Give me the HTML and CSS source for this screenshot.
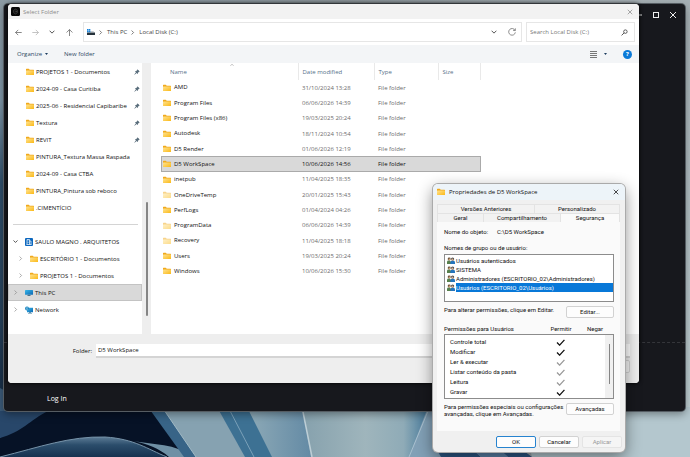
FILE: index.html
```html
<!DOCTYPE html>
<html lang="en">
<head>
<meta charset="utf-8">
<title>Select Folder</title>
<link rel="stylesheet" href="styles.css">
</head>
<body>
<svg class="defs" aria-hidden="true">
  <defs>
    <linearGradient id="fold" x1="0" y1="0" x2="1" y2="1"><stop offset="0" stop-color="#ffe391"/><stop offset="1" stop-color="#fbb917"/></linearGradient>
    <linearGradient id="scr" x1="0" y1="0" x2="1" y2="1"><stop offset="0" stop-color="#38b6e8"/><stop offset="1" stop-color="#0a68b4"/></linearGradient>
  </defs>
  <symbol id="folder" viewBox="0 0 16 14"><path d="M0 1.500Q0 .5 1 .5h4.500L7.500 2.500H15q1 0 1 1V6H0z" fill="#f0a91c"/><path d="M0 5q0-1 1-1h14q1 0 1 1v7q0 1-1 1H1q-1 0-1-1z" fill="url(#fold)"/></symbol>
  <symbol id="pin" viewBox="0 0 12 12"><path d="M7 .5 11.500 5l-1.500.6-2 2-.4 2.700L5.500 8.200 1 11.500.6 11 3.900 6.500 1.700 4.400l2.700-.4 2-2z" fill="#5b6f7d"/></symbol>
  <symbol id="chev" viewBox="0 0 8 8"><path d="M2.500.8 5.700 4 2.500 7.200" fill="none" stroke="currentColor" stroke-width="1.100"/></symbol>
  <symbol id="chevdown" viewBox="0 0 8 8"><path d="M.8 2.300 4 5.500l3.200-3.200" fill="none" stroke="currentColor" stroke-width="1.200"/></symbol>
  <symbol id="pc" viewBox="0 0 16 14"><rect y="1" width="16" height="9.500" rx="1" fill="url(#scr)"/><path d="M6 10.500h4v1.500h2v1.200H4V12h2z" fill="#4b7289"/></symbol>
  <symbol id="net" viewBox="0 0 16 15"><path d="M4 3h12v9H4z" fill="url(#scr)"/><path d="M8 12h4v1.300h2v1.200H6v-1.200h2z" fill="#3b7999"/><circle cx="4" cy="4.500" r="4" fill="#1b7bb9"/><path d="M1 3q3 2 6-1M1 6q3-2 6 1M4 .5v8" stroke="#9be0f5" stroke-width=".9" fill="none"/></symbol>
  <symbol id="users" viewBox="0 0 14 12"><path d="M0 12V8q0-2 3-2t4 2v4z" fill="#57804e"/><circle cx="3.800" cy="3.300" r="2.600" fill="#5e4a35"/><circle cx="4.200" cy="4" r="1.700" fill="#d9a878"/><path d="M6 12V9q0-2.500 4-2.500T14 9v3z" fill="#2575bd"/><circle cx="9.800" cy="3.500" r="2.800" fill="#474747"/><circle cx="9.600" cy="4.300" r="1.800" fill="#d8b193"/></symbol>
  <symbol id="x" viewBox="0 0 8 8"><path d="m1 1 6 6M7 1 1 7" fill="none" stroke="currentColor" stroke-width="1"/></symbol>
  <symbol id="tick" viewBox="0 0 10 8"><path d="M1 4 4 7l5.500-6" fill="none" stroke="currentColor" stroke-width="1.500"/></symbol>
</svg>

<svg class="wallpaper" viewBox="0 0 690 457" preserveAspectRatio="none" aria-hidden="true">
  <defs>
    <linearGradient id="bg"><stop offset="0" stop-color="#8b9ba6"/><stop offset=".5" stop-color="#8b9499"/><stop offset="1" stop-color="#a7b1b6"/></linearGradient>
    <linearGradient id="lf" x1="0" y1="0" x2="0" y2="1"><stop offset="0" stop-color="#8d9ba4"/><stop offset=".22" stop-color="#7f97a8"/><stop offset=".4" stop-color="#31516d"/><stop offset=".7" stop-color="#27425c"/><stop offset="1" stop-color="#0b1d35"/></linearGradient>
    <linearGradient id="wave" x1="0" y1="0" x2="0" y2="1"><stop offset="0" stop-color="#5d7c96"/><stop offset=".4" stop-color="#2b4d6b"/><stop offset="1" stop-color="#163250"/></linearGradient>
    <linearGradient id="pale"><stop offset="0" stop-color="#86a1ad"/><stop offset=".5" stop-color="#9fb5bc"/><stop offset=".8" stop-color="#8fabb7"/><stop offset="1" stop-color="#44789a"/></linearGradient>
    <linearGradient id="mid"><stop offset="0" stop-color="#8eaab7"/><stop offset="1" stop-color="#6289a4"/></linearGradient>
    <linearGradient id="right" x1="0" y1="0" x2="0" y2="1"><stop offset="0" stop-color="#a6b0b5"/><stop offset="1" stop-color="#c0d0d4"/></linearGradient>
  </defs>
  <rect width="690" height="457" fill="url(#bg)"/>
  <rect width="60" height="457" fill="url(#lf)"/>
  <rect x="600" width="90" height="457" fill="url(#right)"/>
  <rect y="405" width="190" height="52" fill="#061226"/>
  <path d="M0 388q22 12 44 20L0 438z" fill="#3b5a78"/>
  <path d="M0 438C22 432 30 420 48 411H0z" fill="#28476a"/>
  <path d="M0 457C40 447 70 436 105 437c30 2 42 12 62 20z" fill="url(#wave)"/>
  <path d="M0 457c40-10 70-21 105-20 30 2 42 12 62 20" fill="none" stroke="#7693a9" stroke-width="1"/>
  <path d="M134 441c20 4 40 2 60 16h-25c-10-9-22-13-35-16z" fill="#6f90a5"/>
  <path d="M148 407h90l22 50h-65z" fill="#86a2b1"/>
  <path d="M148 407h14l34 50h-12z" fill="#386487"/>
  <path d="m162 407 34 50" stroke="#a2bac5" stroke-width="1"/>
  <path d="M217 407h30l28 50h-30z" fill="#3d7193"/>
  <path d="m228 407 26 50" stroke="#7ba1b9" stroke-width="1"/>
  <path d="M247 407h57l10 50h-42z" fill="url(#mid)"/>
  <path d="M302 407h127l-17 50h-101z" fill="url(#pale)"/>
  <path d="m302 407 10 50" stroke="#bdced6" stroke-width="1.500"/>
  <path d="M428 407h80v50h-99z" fill="#82a0b6"/>
  <path d="m428 411-19 46" stroke="#a9c0cf" stroke-width="1"/>
  <path d="M436 448h35l10 9h-40zM498 448h22l12 9h-24z" fill="#2c5784"/>
  <path d="M471 448h27l10 9h-27z" fill="#5a80a6"/>
  <path d="M520 407h170v50H532z" fill="#b4c7ce"/>
</svg>

<section class="app" aria-label="Application">
  <header class="app-controls">
    <button aria-label="Minimize"><svg viewBox="0 0 8 8"><path d="M1 4h6" stroke="#eee"/></svg></button>
    <button aria-label="Maximize"><svg viewBox="0 0 8 8"><rect x="1.500" y="1.500" width="5" height="5" fill="none" stroke="#eee"/></svg></button>
    <button aria-label="Close"><svg><use href="#x"/></svg></button>
  </header>
  <div class="app-main"></div>
  <footer class="app-foot"><a href="#login">Log In</a></footer>
</section>

<section class="dialog" aria-label="Select Folder">
  <header class="dlg-title">
    <svg class="logo" viewBox="0 0 18 18"><rect width="18" height="18" rx="3" fill="#070707"/><path d="M5 6.500 9 4l4 2.500v5L9 14l-4-2.500z" fill="#171717" stroke="#444" stroke-width="1.200"/><path d="M9 9h3" stroke="#666"/></svg>
    <h1>Select Folder</h1>
    <button class="plain" aria-label="Close"><svg class="i6"><use href="#x"/></svg></button>
  </header>

  <div class="nav">
    <button class="plain" aria-label="Back"><svg viewBox="0 0 12 12"><path d="M11.500 6H1m4.500-4.500L1 6l4.500 4.500" fill="none" stroke="#555" stroke-width="1.200"/></svg></button>
    <button class="plain" aria-label="Forward"><svg viewBox="0 0 12 12"><path d="M.5 6H11M6.500 1.500 11 6l-4.500 4.500" fill="none" stroke="#aaa" stroke-width="1.200"/></svg></button>
    <button class="plain small" aria-label="Recent"><svg><use href="#chevdown"/></svg></button>
    <button class="plain" aria-label="Up"><svg viewBox="0 0 12 12"><path d="M6 12V1M1 6l5-5 5 5" fill="none" stroke="#555" stroke-width="1.200"/></svg></button>
    <div class="address">
      <svg class="drive" viewBox="0 0 16 12"><path d="M0 7h16v5H0z" fill="#26323b"/><path d="M1 7h14l-2-2H3z" fill="#8b969d"/><path d="M0 0h3v3H0zM3.700 0h3v3h-3zM0 3.600h3v3H0zM3.700 3.600h3v3h-3z" fill="#1683dc"/></svg>
      <svg class="sep"><use href="#chev"/></svg><a href="#pc">This PC</a>
      <svg class="sep"><use href="#chev"/></svg><a href="#c">Local Disk (C:)</a>
      <span class="grow"></span>
      <button class="plain small" aria-label="History"><svg><use href="#chevdown"/></svg></button>
      <button class="plain reload" aria-label="Refresh"><svg viewBox="0 0 12 12"><path d="M10.500 3.500A5 5 0 1 0 11 6.500M11 .5v3.300H7.700" fill="none" stroke="#666" stroke-width="1.100"/></svg></button>
    </div>
    <div class="search">
      <input type="text" aria-label="Search" placeholder="Search Local Disk (C:)">
      <svg viewBox="0 0 12 12"><circle cx="7.500" cy="4.500" r="3" fill="none" stroke="#333" stroke-width="1.300"/><path d="M5.300 6.700 1 11" stroke="#333" stroke-width="1.400"/></svg>
    </div>
  </div>

  <div class="tools">
    <button class="plain">Organize <svg class="tri" viewBox="0 0 6 4"><path d="M0 0h6L3 4z" fill="#1c3d5e"/></svg></button>
    <button class="plain">New folder</button>
    <span class="grow"></span>
    <button class="plain view" aria-label="View"><svg viewBox="0 0 7 7"><path d="M0 .5h7M0 2.500h7M0 4.500h7M0 6.500h7" stroke="#777"/></svg><svg class="tri" viewBox="0 0 6 4"><path d="M0 0h6L3 4z" fill="#1c3d5e"/></svg></button>
    <button class="plain help" aria-label="Help">?</button>
  </div>

  <div class="body">
    <nav class="tree" aria-label="Folders">
      <ul>
        <li class="q"><svg class="fi"><use href="#folder"/></svg><span>PROJETOS 1 - Documentos</span><svg class="pin"><use href="#pin"/></svg></li>
        <li class="q"><svg class="fi"><use href="#folder"/></svg><span>2024-09 - Casa Curitiba</span><svg class="pin"><use href="#pin"/></svg></li>
        <li class="q"><svg class="fi"><use href="#folder"/></svg><span>2025-06 - Residencial Capibaribe</span><svg class="pin"><use href="#pin"/></svg></li>
        <li class="q"><svg class="fi"><use href="#folder"/></svg><span>Textura</span><svg class="pin"><use href="#pin"/></svg></li>
        <li class="q"><svg class="fi"><use href="#folder"/></svg><span>REVIT</span><svg class="pin"><use href="#pin"/></svg></li>
        <li class="q"><svg class="fi"><use href="#folder"/></svg><span>PINTURA_Textura Massa Raspada</span></li>
        <li class="q"><svg class="fi"><use href="#folder"/></svg><span>2024-09 - Casa CTBA</span></li>
        <li class="q"><svg class="fi"><use href="#folder"/></svg><span>PINTURA_Pintura sob reboco</span></li>
        <li class="q"><svg class="fi"><use href="#folder"/></svg><span>.CIMENTÍCIO</span></li>
        <li class="rule"></li>
        <li><svg class="tw open"><use href="#chevdown"/></svg><svg class="fi" viewBox="0 0 16 16"><rect width="16" height="16" rx="2" fill="#0c67be"/><path d="M4 13V3h5v10M9 6h3v7M6 5v1.500M6 8v1.500M3 13h10" stroke="#fff" stroke-width="1.400" fill="none"/></svg><span>SAULO MAGNO . ARQUITETOS</span></li>
        <li class="sub"><svg class="tw"><use href="#chev"/></svg><svg class="fi"><use href="#folder"/></svg><span>ESCRITÓRIO 1 - Documentos</span></li>
        <li class="sub"><svg class="tw"><use href="#chev"/></svg><svg class="fi"><use href="#folder"/></svg><span>PROJETOS 1 - Documentos</span></li>
        <li class="sel"><svg class="tw"><use href="#chev"/></svg><svg class="fi"><use href="#pc"/></svg><span>This PC</span></li>
        <li><svg class="tw"><use href="#chev"/></svg><svg class="fi"><use href="#net"/></svg><span>Network</span></li>
      </ul>
    </nav>
    <div class="gutter"><i></i></div>
    <div class="files">
      <table>
        <colgroup><col class="c1"><col class="c2"><col class="c3"><col class="c4"></colgroup>
        <thead><tr><th>Name<svg class="sort" viewBox="0 0 8 8"><path d="M1 5.500 4 2.500l3 3" fill="none" stroke="#777"/></svg></th><th>Date modified</th><th>Type</th><th>Size</th></tr></thead>
        <tbody>
          <tr><td><svg class="fi"><use href="#folder"/></svg>AMD</td><td>31/10/2024 13:28</td><td>File folder</td><td></td></tr>
          <tr><td><svg class="fi"><use href="#folder"/></svg>Program Files</td><td>06/06/2026 14:39</td><td>File folder</td><td></td></tr>
          <tr><td><svg class="fi"><use href="#folder"/></svg>Program Files (x86)</td><td>19/03/2025 20:24</td><td>File folder</td><td></td></tr>
          <tr><td><svg class="fi"><use href="#folder"/></svg>Autodesk</td><td>18/11/2024 10:54</td><td>File folder</td><td></td></tr>
          <tr><td><svg class="fi"><use href="#folder"/></svg>D5 Render</td><td>01/06/2026 12:19</td><td>File folder</td><td></td></tr>
          <tr class="sel"><td><svg class="fi"><use href="#folder"/></svg>D5 WorkSpace</td><td>10/06/2026 14:56</td><td>File folder</td><td></td></tr>
          <tr><td><svg class="fi"><use href="#folder"/></svg>inetpub</td><td>11/04/2025 18:35</td><td>File folder</td><td></td></tr>
          <tr><td><svg class="fi dim"><use href="#folder"/></svg>OneDriveTemp</td><td>20/01/2025 15:43</td><td>File folder</td><td></td></tr>
          <tr><td><svg class="fi"><use href="#folder"/></svg>PerfLogs</td><td>01/04/2024 04:26</td><td>File folder</td><td></td></tr>
          <tr><td><svg class="fi dim"><use href="#folder"/></svg>ProgramData</td><td>06/06/2026 14:39</td><td>File folder</td><td></td></tr>
          <tr><td><svg class="fi dim"><use href="#folder"/></svg>Recovery</td><td>11/04/2025 18:18</td><td>File folder</td><td></td></tr>
          <tr><td><svg class="fi"><use href="#folder"/></svg>Users</td><td>19/03/2025 20:24</td><td>File folder</td><td></td></tr>
          <tr><td><svg class="fi"><use href="#folder"/></svg>Windows</td><td>10/06/2026 15:30</td><td>File folder</td><td></td></tr>
        </tbody>
      </table>
    </div>
  </div>

  <footer class="dlg-foot">
    <label for="folder-name">Folder:</label>
    <input id="folder-name" type="text" value="D5 WorkSpace">
    <div class="dlg-actions"><button aria-label="Select folder"></button><button aria-label="Cancel"></button></div>
  </footer>
</section>

<section class="props" lang="pt" aria-label="Propriedades">
  <header class="p-title">
    <svg class="fi"><use href="#folder"/></svg>
    <h2>Propriedades de D5 WorkSpace</h2>
    <button class="plain" aria-label="Fechar"><svg class="i6"><use href="#x"/></svg></button>
  </header>
  <div class="tabs back"><button>Versões Anteriores</button><button>Personalizado</button></div>
  <div class="tabs front"><button>Geral</button><button>Compartilhamento</button><button class="on">Segurança</button></div>
  <div class="panel">
    <p class="object"><span>Nome do objeto:</span><span>C:\D5 WorkSpace</span></p>
    <p class="cap">Nomes de grupo ou de usuário:</p>
    <ul class="box groups">
      <li><svg><use href="#users"/></svg><span>Usuários autenticados</span></li>
      <li><svg><use href="#users"/></svg><span>SISTEMA</span></li>
      <li><svg><use href="#users"/></svg><span>Administradores (ESCRITORIO_02\Administradores)</span></li>
      <li class="on"><svg><use href="#users"/></svg><span>Usuários (ESCRITORIO_02\Usuários)</span></li>
    </ul>
    <div class="line"><p>Para alterar permissões, clique em Editar.</p><button class="btn">Editar...</button></div>
    <div class="perm-head"><span>Permissões para Usuários</span><span>Permitir</span><span>Negar</span></div>
    <div class="box perms">
      <table>
        <tr><td>Controle total</td><td><svg><use href="#tick"/></svg></td></tr>
        <tr><td>Modificar</td><td><svg><use href="#tick"/></svg></td></tr>
        <tr><td>Ler &amp; executar</td><td><svg class="soft"><use href="#tick"/></svg></td></tr>
        <tr><td>Listar conteúdo da pasta</td><td><svg class="soft"><use href="#tick"/></svg></td></tr>
        <tr><td>Leitura</td><td><svg class="soft"><use href="#tick"/></svg></td></tr>
        <tr><td>Gravar</td><td><svg><use href="#tick"/></svg></td></tr>
      </table>
      <div class="bar"><i></i></div>
    </div>
    <div class="line adv"><p>Para permissões especiais ou configurações<br>avançadas, clique em Avançadas.</p><button class="btn">Avançadas</button></div>
  </div>
  <footer class="p-foot"><button class="btn ok">OK</button><button class="btn">Cancelar</button><button class="btn" disabled>Aplicar</button></footer>
</section>
</body>
</html>
```
FILE: styles.css
```css
* { box-sizing: border-box; }
body {
  margin: 0;
  height: 100vh;
  overflow: hidden;
  position: relative;
  font: 6px/8px "Open Sans", "Noto Sans", sans-serif;
  color: #111;
}
h1, h2, p, ul { margin: 0; padding: 0; font-size: inherit; font-weight: 400; list-style: none; }
svg { display: block; flex: none; }
button, input { font: inherit; color: inherit; padding: 0; margin: 0; }
a { color: inherit; text-decoration: none; }
i { display: block; }
.defs { position: absolute; width: 0; height: 0; }
.wallpaper { position: absolute; inset: 0; width: 100%; height: 100%; }
.grow { flex: 1; }
.plain { border: 0; background: none; display: flex; align-items: center; }
.i6 { width: 6px; height: 6px; }
.fi { width: 8px; height: 8px; }
.dim { opacity: .5; }

/* application window */
.app {
  position: absolute;
  inset: 4px 5px 46px 4px;
  display: flex;
  flex-direction: column;
  background: #17181d;
  border-radius: 4px;
  box-shadow: 0 0 0 1px #555c62, 0 3px 8px #0006;
}
.app-controls { display: flex; justify-content: flex-end; gap: 9px; padding: 7px 8px 0; }
.app-controls button { border: 0; background: none; color: #eee; width: 8px; height: 8px; }
.app-controls svg { width: 8px; height: 8px; }
.app-main { flex: 1; border-bottom: 1px dashed #34353a; }
.app-foot { height: 68px; padding: 52px 43px 0; color: #fff; font-size: 7px; }

/* folder picker */
.dialog {
  position: absolute;
  inset: 4px 51px 74px 8px;
  display: flex;
  flex-direction: column;
  background: #fff;
  border-radius: 4px;
  overflow: hidden;
  box-shadow: 0 0 4px #000;
}
.dlg-title { height: 15px; display: flex; align-items: center; gap: 3px; padding: 0 6px 0 3px; background: #f2f2f2; color: #8b8b8b; }
.dlg-title h1 { flex: 1; }
.logo { width: 9px; height: 9px; }
.nav { height: 26px; display: flex; align-items: center; padding: 0 4px 0 7px; color: #444; }
.nav > .plain { width: 8px; margin-right: 9px; }
.nav > .plain svg { width: 7px; height: 7px; }
.nav > .small svg, .address .small svg { width: 6px; height: 6px; }
.address, .search { height: 20px; border: 1px solid #e6e6e6; display: flex; align-items: center; }
.address { flex: 1; padding: 0 5px 0 3px; margin-right: 4px; }
.drive { width: 8px; height: 6px; margin-right: 2px; }
.sep { width: 5px; height: 5px; margin: 0 4px 0 1px; }
.address a { margin-right: 2px; }
.address .small { margin-right: 11px; }
.reload svg { width: 8px; height: 8px; }
.search { width: 109px; padding: 0 6px 0 3px; }
.search input { flex: 1; min-width: 0; border: 0; outline: 0; background: none; }
.search input::placeholder { color: #777; opacity: 1; }
.search svg { width: 7px; height: 7px; }
.tools { height: 18px; display: flex; align-items: center; padding: 0 7px 0 9px; background: #f3f5f7; color: #2f4a63; }
.tools .plain { margin-right: 16px; gap: 3px; }
.tri { width: 3px; height: 2px; }
.tools .view { gap: 7px; }
.view svg:first-child { width: 7px; height: 7px; }
.tools .help { width: 9px; height: 9px; margin: 0; justify-content: center; border-radius: 50%; background: #0b7ad8; color: #fff; font-weight: 700; }

.body { flex: 1; min-height: 0; display: flex; }
.tree { width: 134px; }
.tree li { height: 17px; display: flex; align-items: center; padding-left: 5px; }
.tree li span { flex: 1; margin-left: 2px; white-space: nowrap; }
.tree .q { padding: 0 2px 0 18px; }
.tree .sub { padding-left: 10px; }
.tw { width: 5px; height: 5px; margin-right: 7px; color: #888; }
.tree .open { color: #222; }
.pin { width: 6px; height: 6px; }
.tree .rule::before { content: ""; width: 125px; height: 1px; background: #d4d4d4; }
.tree .sel { background: #d9d9d9; outline: 1px solid #c3c3c3; outline-offset: -1px; }
.gutter { width: 9px; background: #eee; padding: 139px 3px 0 4px; }
.gutter i { height: 114px; background: #858585; border-radius: 1px; }
.files { flex: 1; padding-left: 10px; }
.files table { width: 320px; height: 216px; border-collapse: collapse; table-layout: fixed; }
.c1 { width: 137px; } .c2 { width: 76px; } .c3 { width: 64px; }
.files th, .files td { padding: 0 0 0 4px; text-align: left; font-weight: 400; white-space: nowrap; color: #6c6c6c; vertical-align: middle; }
.files th { height: 17px; color: #557089; border-right: 1px solid #e9e9e9; position: relative; }
.files th:first-child { padding-left: 9px; }
.sort { position: absolute; left: 68px; top: 0; width: 6px; height: 4px; }
.files td:first-child { padding-left: 2px; color: #111; }
.files td .fi { display: inline-block; vertical-align: middle; margin-right: 3px; }
.files .sel { background: #d9d9d9; outline: 1px solid #aaa; outline-offset: -1px; }
.files .sel td { color: #111; }

.dlg-foot {
  height: 49px;
  background: #eee;
  display: grid;
  grid-template-columns: 84px 1fr;
  grid-template-rows: 14px 13px;
  gap: 2px 4px;
  padding: 10px 9px 10px 0;
}
.dlg-foot label { text-align: right; align-self: center; }
.dlg-foot input { border: 0; border-bottom: 2px solid #d4d4d4; background: #fff; padding: 0 2px; width: 100%; outline: 0; }
.dlg-actions { grid-column: 2; display: flex; justify-content: flex-end; gap: 4px; }
.dlg-actions button { width: 60px; border: 1px solid #d3d3d3; background: #f5f5f5; border-radius: 2px; }

/* properties window */
.props {
  position: absolute;
  top: 184px;
  right: 65px;
  width: 192px;
  padding: 0 5px 4px 4px;
  background: #f0f0f0;
  border-radius: 5px;
  box-shadow: 0 0 0 1px #aaa, 0 5px 16px #0007;
  font-family: Roboto, "Liberation Sans", sans-serif;
}
.p-title { height: 16px; margin: 0 -5px 4px -4px; padding: 0 6px 0 4px; display: flex; align-items: center; gap: 4px; background: #edf4f9; border-radius: 5px 5px 0 0; font-family: "Open Sans", sans-serif; }
.p-title h2 { flex: 1; }
.tabs { display: flex; }
.tabs button { height: 9px; border: 1px solid #e3e3e3; border-width: 1px 1px 0 0; background: #f2f2f2; line-height: 8px; flex: 1; }
.tabs button:first-child { border-left-width: 1px; }
.tabs.back button:first-child { flex: 0 0 98px; }
.tabs.front button { flex: 0 0 77px; }
.tabs.front button:first-child { flex: 0 0 47px; }
.tabs.front .on { flex: 1; background: #fafafa; }
.panel { height: 209px; padding: 6px 6px 0 7px; background: #fafafa; }
.object { display: grid; grid-template-columns: 53px 1fr; margin-bottom: 8px; }
.cap { margin-bottom: 2px; }
.box { border: 1px solid #8c8c8c; background: #fff; }
.groups { height: 48px; padding: 1px 0 0 2px; }
.groups li { height: 9px; display: flex; align-items: center; gap: 1px; }
.groups svg { width: 8px; height: 7px; }
.groups span { height: 9px; line-height: 9px; flex: 1; white-space: nowrap; }
.groups .on span { background: #0878d8; color: #fff; }
.line { display: flex; justify-content: space-between; margin-top: 4px; height: 12px; }
.line p { white-space: nowrap; }
.btn { width: 48px; height: 12px; flex: none; background: #fdfdfd; border: 1px solid #d2d2d2; border-radius: 2px; }
.perm-head { display: grid; grid-template-columns: 1fr 34px 34px; margin: 7px 0 1px; text-align: center; padding-right: 2px; }
.perm-head span:first-child { text-align: left; }
.perms { height: 65px; display: flex; }
.perms table { flex: 1; border-collapse: collapse; margin-top: 2px; height: 60px; }
.perms td { padding: 0 0 0 5px; height: 10px; }
.perms td:last-child { width: 49px; padding: 0; }
.perms svg { width: 9px; height: 7px; color: #111; }
.perms .soft { color: #999; }
.bar { width: 8px; background: #f0f0f0; padding: 9px 3px 0 4px; }
.bar i { height: 40px; background: #858585; }
.adv p { line-height: 7px; }
.p-foot { display: flex; justify-content: flex-end; gap: 3px; margin-right: -2px; padding-top: 5px; }
.p-foot .btn { width: 40px; }
.p-foot .ok { border-color: #2683cf; }
.p-foot .btn:disabled { color: #999; background: #f5f5f5; border-color: #e4e4e4; }
```
